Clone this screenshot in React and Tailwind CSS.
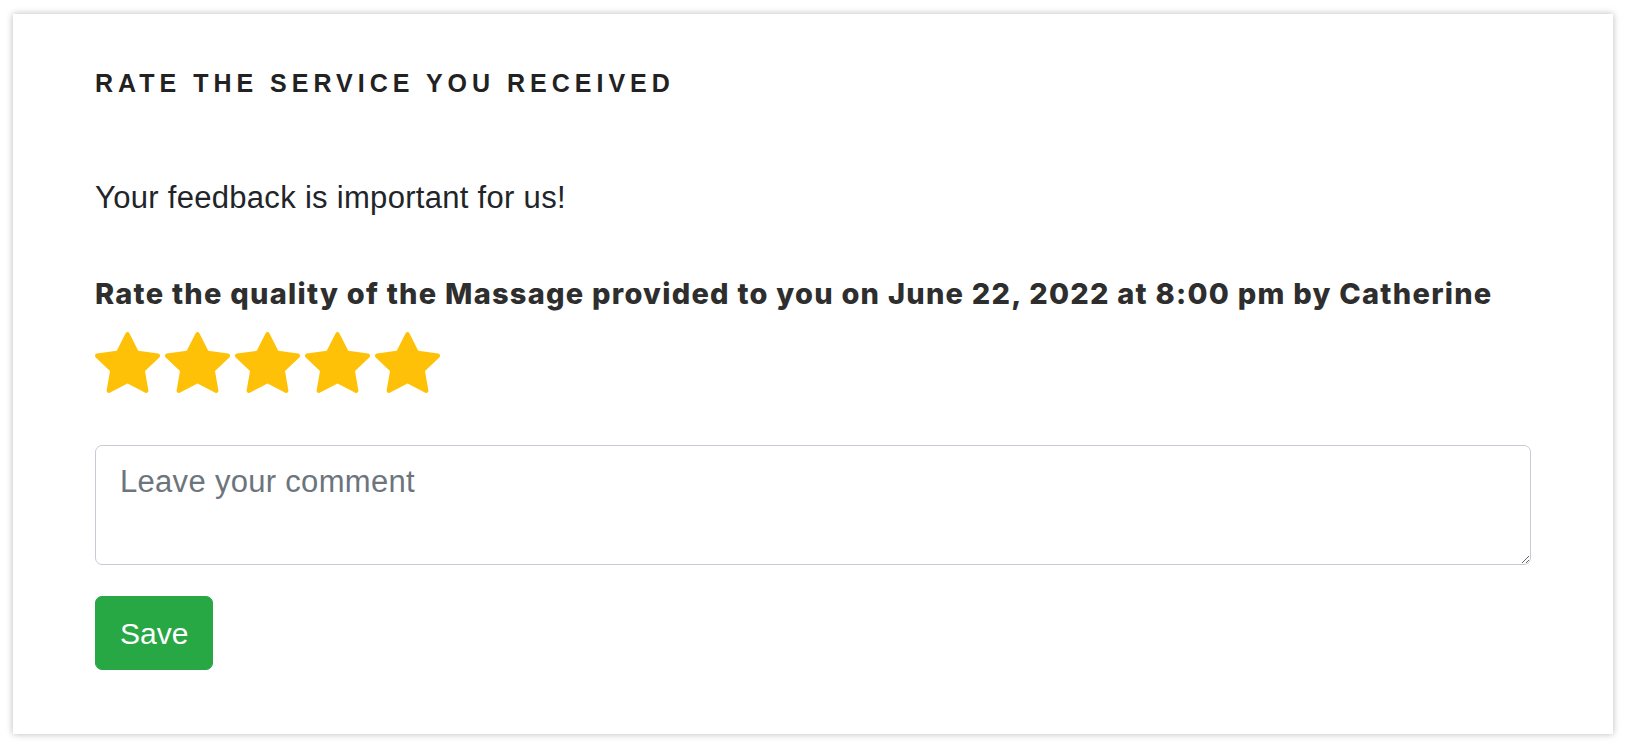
import { useState } from 'react'

const STAR_PATH =
  'M3.612 15.443c-.386.198-.824-.149-.746-.592l.83-4.73L.173 6.765c-.329-.314-.158-.888.283-.95l4.898-.696L7.538.792c.197-.39.73-.39.927 0l2.184 4.327 4.898.696c.441.062.612.636.282.95l-3.522 3.356.83 4.73c.078.443-.36.79-.746.592L8 13.187l-4.389 2.256z'

function Star({ filled, onClick }) {
  return (
    <button type="button" onClick={onClick} className="block h-[65px] w-[65px] cursor-pointer">
      <svg viewBox="0 0 16 16" width="65" height="65" fill={filled ? '#ffc107' : '#e5e7eb'}>
        <path d={STAR_PATH} />
      </svg>
    </button>
  )
}

export default function App() {
  const [rating, setRating] = useState(5)
  const [comment, setComment] = useState('')

  return (
    <div className="min-h-screen bg-white pl-[13px] pt-[14px]">
      <div className="w-[1600px] bg-white px-[82px] pb-[64px] pt-[54px] shadow-[0_0_7px_rgba(0,0,0,0.28)]">
        <h5 className="text-[25px] font-bold uppercase leading-[30px] tracking-[5px] text-[#222] [font-family:'Liberation_Sans',Arial,sans-serif]">
          Rate the service you received
        </h5>

        <p className="mt-[77px] text-[31px] leading-[45px] tracking-[0.3px] text-[#212529] [font-family:'Liberation_Sans',Arial,sans-serif]">
          Your feedback is important for us!
        </p>

        <p className="mt-[52px] text-[29px] font-extrabold leading-[43px] tracking-[1.25px] text-[#2e2e2e] [font-family:Inter,sans-serif]">
          Rate the quality of the Massage provided to you on June 22, 2022 at 8:00 pm by Catherine
        </p>

        <div className="mt-[15px] flex gap-[5px]">
          {[1, 2, 3, 4, 5].map((n) => (
            <Star key={n} filled={n <= rating} onClick={() => setRating(n)} />
          ))}
        </div>

        <textarea
          value={comment}
          onChange={(e) => setComment(e.target.value)}
          placeholder="Leave your comment"
          className="mt-[50px] block h-[120px] w-full rounded-[7px] border border-[#c5ccd4] px-[24px] pt-[13px] text-[31px] leading-[45px] tracking-[0.3px] text-[#495057] outline-none placeholder:text-[#6c757d] [font-family:'Liberation_Sans',Arial,sans-serif]"
        />

        <button
          type="button"
          className="mt-[31px] block h-[74px] rounded-[7px] border border-[#28a745] bg-[#28a745] px-[24px] text-[30px] leading-[45px] text-white [font-family:'Liberation_Sans',Arial,sans-serif]"
        >
          Save
        </button>
      </div>
    </div>
  )
}
